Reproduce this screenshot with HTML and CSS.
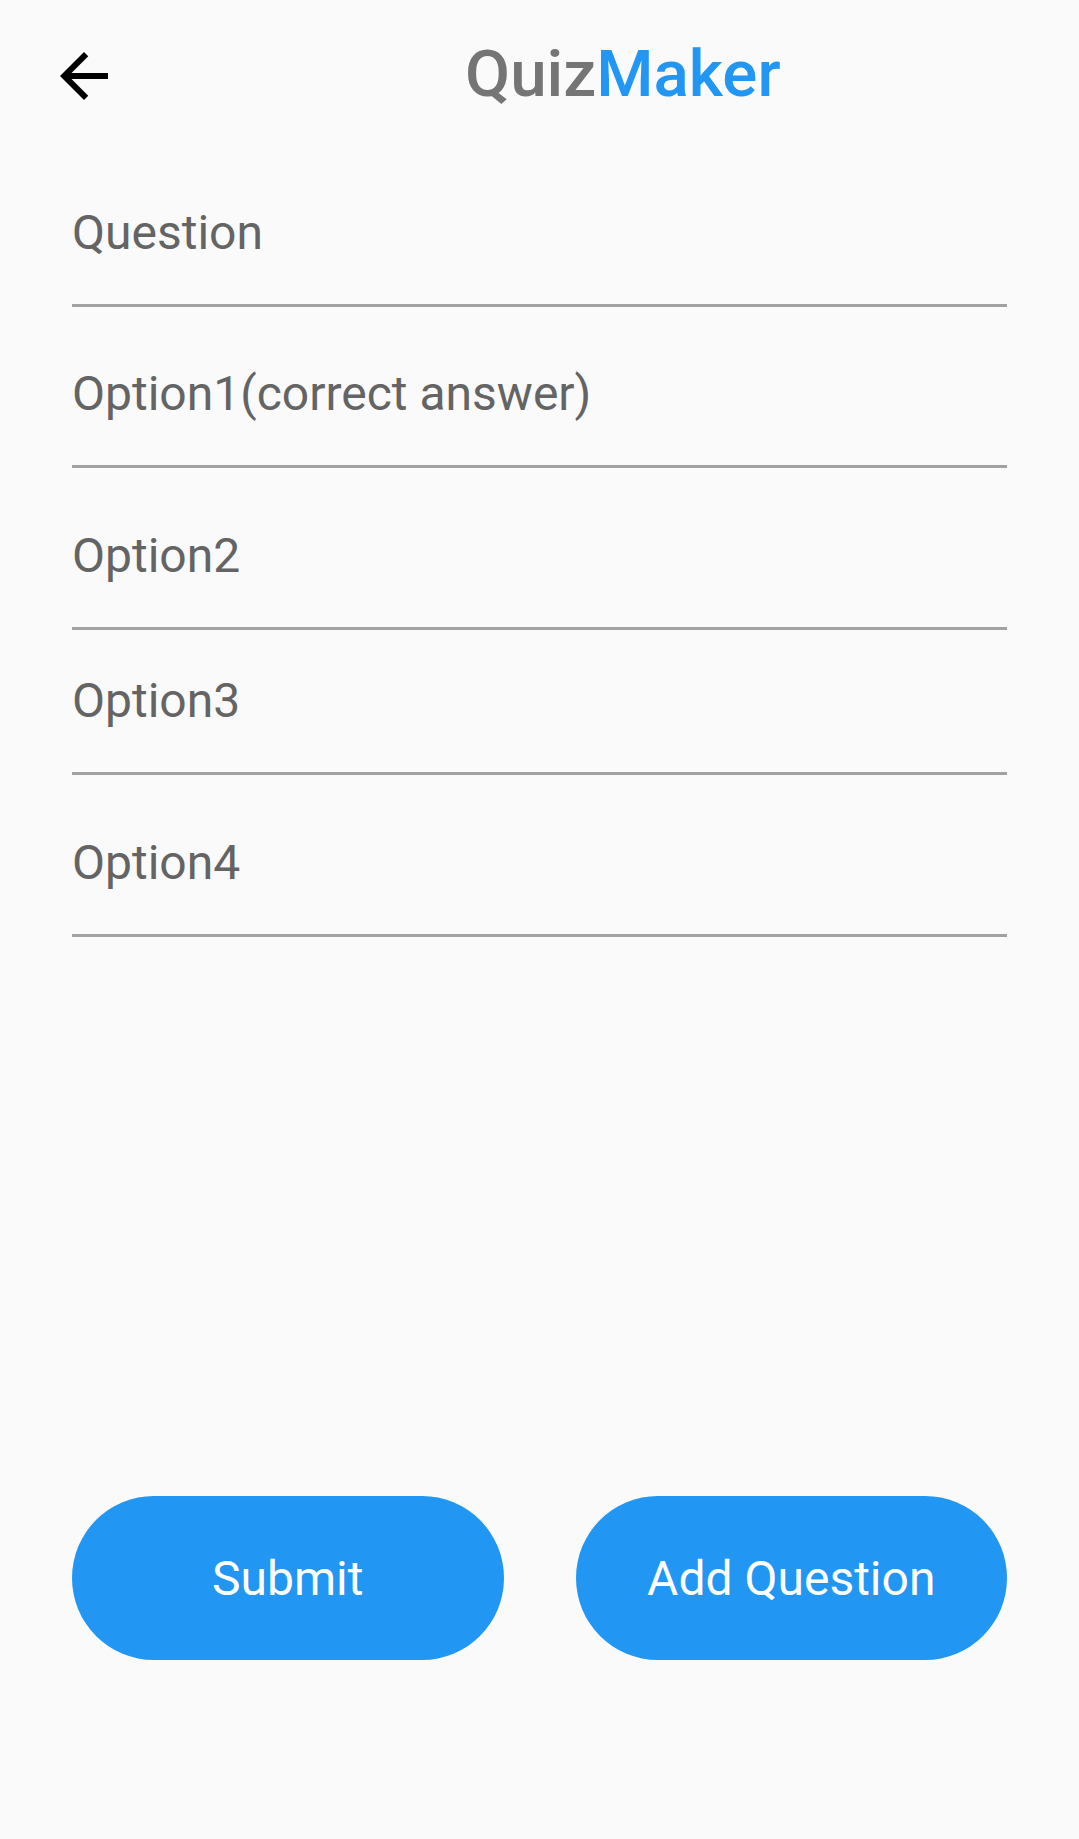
FILE: index.html
```html
<!DOCTYPE html>
<html lang="en">
<head>
<meta charset="utf-8">
<title>QuizMaker</title>
<link rel="stylesheet" href="styles.css">
</head>
<body>
<div class="screen">
  <header class="appbar">
    <button class="back" aria-label="Back">
      <svg viewBox="0 0 24 24" width="72" height="72"><path d="M20 11H7.83l5.59-5.59L12 4l-8 8 8 8 1.41-1.41L7.83 13H20v-2z" fill="#000"/></svg>
    </button>
    <h1 class="title"><span class="quiz">Quiz</span><span class="maker">Maker</span></h1>
  </header>
  <main class="form">
    <div class="field"><span class="label">Question</span></div>
    <div class="field"><span class="label">Option1(correct answer)</span></div>
    <div class="field"><span class="label">Option2</span></div>
    <div class="field field-tight"><span class="label">Option3</span></div>
    <div class="field"><span class="label">Option4</span></div>
  </main>
  <div class="spacer"></div>
  <div class="actions">
    <button class="btn">Submit</button>
    <button class="btn">Add Question</button>
  </div>
</div>
</body>
</html>
```

FILE: styles.css
```css
html, body {
  margin: 0;
  padding: 0;
  background: #fafafa;
}
body {
  font-family: Roboto, "Liberation Sans", sans-serif;
}
.screen {
  min-height: 1839px;
  display: flex;
  flex-direction: column;
}
.appbar {
  height: 144px;
  box-sizing: border-box;
  padding: 40px 0 0 48px;
  display: flex;
  align-items: flex-start;
}
.back {
  width: 72px;
  height: 72px;
  padding: 0;
  margin: 0;
  border: none;
  background: none;
  display: block;
}
.back svg { display: block; }
.title {
  margin: 1px 0 0 345px;
  font-size: 65.5px;
  line-height: 66px;
  font-weight: 500;
  letter-spacing: 0;
}
.quiz { color: #757575; }
.maker { color: #2196f3; }
.form {
  padding: 0 72px;
  display: flex;
  flex-direction: column;
}
.field {
  padding: 63.6px 0 47px;
  border-bottom: 3px solid #a2a2a2;
}
.field:first-child {
  padding-top: 64.6px;
}
.field-tight {
  padding-top: 47.6px;
}
.label {
  display: block;
  font-size: 48px;
  line-height: 48px;
  color: #646464;
}
.spacer { flex: 1; }
.actions {
  display: flex;
  gap: 72px;
  padding: 0 72px;
  margin-bottom: 179px;
}
.btn {
  flex: 1;
  height: 164px;
  border: none;
  border-radius: 82px;
  background: #2196f3;
  color: #fff;
  font-family: Roboto, "Liberation Sans", sans-serif;
  font-size: 48px;
  font-weight: 400;
}
```
